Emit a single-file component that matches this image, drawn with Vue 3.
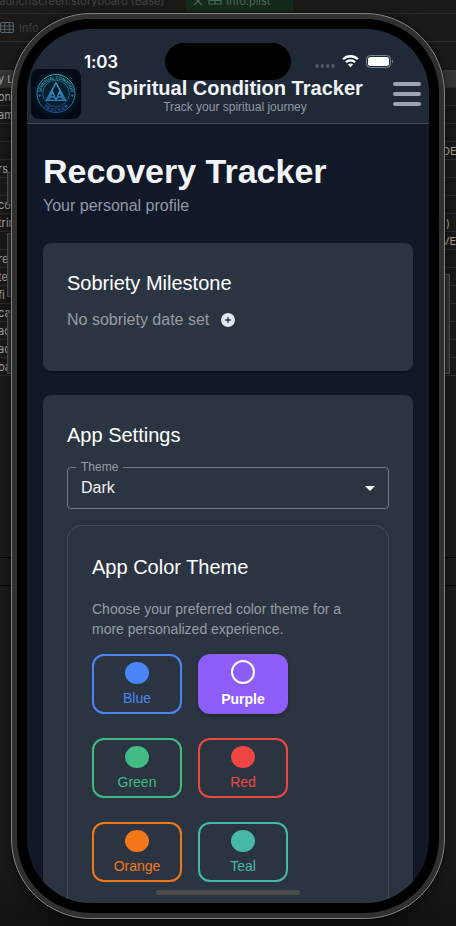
<script setup>
const leftRows = ['y Li', 'on', 'am', '', '', 'rs', '', 'co', 'trin', '', 're', 'te', 'fi', 'ca', 'ac', 'ac', 'ba']
const rightRows = ['', '', '', '', 'DE', '', '', '', ')', 'VE', '', '', '', '', '', '', '']
const themes = [
  { name: 'Blue', color: '#4a86f7' },
  { name: 'Purple', color: '#8e5cf7', selected: true },
  { name: 'Green', color: '#41ba83' },
  { name: 'Red', color: '#f04545' },
  { name: 'Orange', color: '#f27719' },
  { name: 'Teal', color: '#47b9a9' }
]
</script>

<template>
  <div class="desktop">
    <div class="editor-tabs">
      <span class="tab">LaunchScreen.storyboard (Base)</span>
      <span class="tab active">
        <svg width="31" height="12" viewBox="0 0 31 12" fill="none" stroke="#4d6a54" stroke-width="1.2"><path d="M1 5l8-8M1-3l8 8M16-4h12v8H16zM16 .500h12M22-4v8" /></svg>
        Info.plist
      </span>
    </div>
    <div class="crumbs">
      <svg width="14" height="11" viewBox="0 0 14 11" fill="none" stroke="#53656e"><rect x=".5" y=".5" width="13" height="10" rx="1.500" /><path d="M0 4h14M0 7.300h14M4.700 0v11M9.300 0v11" /></svg>
      <span>Info</span>
    </div>
    <div class="table">
      <div v-for="(t, i) in leftRows" :key="i" class="table-row" :class="{ head: i === 0 }">
        <span class="key">{{ t }}</span><span class="value">{{ rightRows[i] }}</span>
      </div>
    </div>
    <div class="debug-bar"></div>

    <i class="side-button action"></i>
    <i class="side-button vol-up"></i>
    <i class="side-button vol-down"></i>
    <i class="side-button power"></i>

    <div class="phone">
      <div class="bezel">
        <div class="screen">
          <header class="app-header">
            <div class="logo">
              <svg width="50" height="50" viewBox="0 0 50 50">
                <defs>
                  <linearGradient id="lg" x1="0" y1="5" x2="0" y2="45" gradientUnits="userSpaceOnUse">
                    <stop offset="0" stop-color="#3fa9b0" /><stop offset=".5" stop-color="#3184b2" /><stop offset="1" stop-color="#3047a0" />
                  </linearGradient>
                  <radialGradient id="glow"><stop offset=".5" stop-color="#052031" /><stop offset="1" stop-color="#020b16" /></radialGradient>
                  <path id="top-arc" d="M10.400 25a14.700 14.700 0 0 1 29.400 0" />
                  <path id="bottom-arc" d="M7 24.500a18 18 0 0 0 36 0" />
                </defs>
                <circle cx="25" cy="24.500" r="25" fill="url(#glow)" />
                <g fill="none" stroke="url(#lg)">
                  <circle cx="25" cy="24.500" r="19" stroke-width="1" />
                  <circle cx="25" cy="24.500" r="13.300" stroke-width=".6" />
                  <path d="M15.500 31.200L25 14l9.500 17.200z" stroke-width="1.500" />
                  <path d="M17.500 31l3.900-8.500L25 31l3.600-8.500 3.900 8.500M19 28h5M26 28h5" stroke-width="1.500" />
                </g>
                <g class="logo-text" fill="url(#lg)">
                  <text><textPath href="#top-arc" startOffset="50%" text-anchor="middle" textLength="43">SPIRITUAL CONDITION</textPath></text>
                  <text><textPath href="#bottom-arc" startOffset="50%" text-anchor="middle" textLength="27">TRACKER</textPath></text>
                  <circle cx="8.800" cy="26.500" r="1" /><circle cx="41.200" cy="26.500" r="1" />
                </g>
              </svg>
            </div>
            <div class="brand">
              <h1>Spiritual Condition Tracker</h1>
              <p>Track your spiritual journey</p>
            </div>
            <div class="menu"><i></i><i></i><i></i></div>
          </header>

          <main class="page">
            <h2>Recovery Tracker</h2>
            <p class="lead">Your personal profile</p>

            <section class="card milestone">
              <h3>Sobriety Milestone</h3>
              <div class="date-row">
                <span>No sobriety date set</span>
                <svg width="14" height="14" viewBox="0 0 14 14"><circle cx="7" cy="7" r="7" fill="#e5e7eb" /><path d="M7 4.200v5.600M4.200 7h5.600" stroke="#2b3541" stroke-width="1.400" /></svg>
              </div>
            </section>

            <section class="card settings">
              <h3>App Settings</h3>
              <fieldset class="select">
                <legend>Theme</legend>
                <span>Dark</span>
                <svg width="10" height="5" viewBox="0 0 10 5"><path d="M0 0h10L5 5z" fill="#fff" /></svg>
              </fieldset>
              <div class="palette">
                <h3>App Color Theme</h3>
                <p>Choose your preferred color theme for a more personalized experience.</p>
                <div class="swatches">
                  <button v-for="t in themes" :key="t.name" class="swatch" :class="{ selected: t.selected }" :style="{ '--tone': t.color }">
                    <i class="dot"></i>
                    <span>{{ t.name }}</span>
                  </button>
                </div>
              </div>
            </section>
          </main>

          <div class="status-bar">
            <span class="time">1:03</span>
            <div class="status-icons">
              <svg class="cell" width="20" height="4" viewBox="0 0 20 4" fill="#4f5764"><circle cx="2" cy="2" r="1.900" /><circle cx="7.300" cy="2" r="1.900" /><circle cx="12.700" cy="2" r="1.900" /><circle cx="18" cy="2" r="1.900" /></svg>
              <svg class="wifi" width="17" height="13" viewBox="0 0 17 13"><path d="M1 4.300a10.700 10.700 0 0 1 15 0M3.900 7.300a6.600 6.600 0 0 1 9.200 0" fill="none" stroke="#fff" stroke-width="2.300" /><path d="M8.500 12.300L5.900 9.600a3.800 3.800 0 0 1 5.200 0z" fill="#fff" /></svg>
              <svg width="27" height="13" viewBox="0 0 27 13"><rect x=".5" y=".5" width="24" height="12" rx="3.800" fill="none" stroke="#7e858f" /><rect x="2" y="2" width="21" height="9" rx="2.500" fill="#fff" /><path d="M26 4.500c1.300.7 1.300 3.300 0 4z" fill="#7e858f" /></svg>
            </div>
          </div>
          <div class="island"></div>
          <div class="home-bar"></div>
        </div>
      </div>
    </div>
  </div>
</template>

<style>
body { margin: 0; background: #1a1917; }
</style>

<style scoped>
* { box-sizing: border-box; }
h1, h2, h3, p { margin: 0; font-weight: 400; }
.desktop { position: relative; width: 456px; height: 926px; overflow: hidden; background: linear-gradient(#1b1a18 0 870px, #11110f); font-family: "Liberation Sans", Arial, sans-serif; }
.editor-tabs { display: flex; height: 14px; border-bottom: 1px solid #2a2a28; }
.tab { width: 186px; height: 12px; overflow: hidden; white-space: nowrap; font: 11px/3px Inter, sans-serif; color: #444340; text-indent: -7px; }
.tab.active { display: flex; gap: 2px; width: 107px; padding-left: 7px; text-indent: 0; background: #152b1b; color: #4d6a54; }
.crumbs { display: flex; align-items: center; gap: 5px; height: 28px; border-bottom: 1px solid #343330; font: 11px Inter, sans-serif; color: #3f3f3c; }
.table { margin-top: 28px; }
.table-row { display: flex; justify-content: space-between; height: 18px; border-bottom: 1px solid #302f2d; font: 11px/18px Inter, sans-serif; color: #aaa9a7; white-space: nowrap; }
.table-row.head { background: #373735; }
.key { width: 16px; margin-left: -2px; overflow: hidden; }
.value { width: 12px; overflow: hidden; text-indent: -2px; }
.table-row:nth-child(9) .value { width: 10px; text-indent: 0; }
.debug-bar { height: 29px; margin-top: 181px; border: solid #030303; border-width: 1px 0; }
.side-button { position: absolute; background: #343434; border: 1px solid #555; width: 6px; }
.action { left: 7px; top: 172px; height: 33px; }
.vol-up { left: 7px; top: 233px; height: 64px; }
.vol-down { left: 7px; top: 312px; height: 62px; }
.power { left: 444px; top: 274px; height: 100px; }
.phone { position: absolute; left: 11px; top: 13px; width: 434px; height: 906px; border: 1px solid #858585; border-radius: 80px; background: #303030; padding: 5px; box-shadow: 0 0 2px #000, 0 6px 18px rgba(0, 0, 0, .45); }
.bezel { height: 100%; border-radius: 74px; background: #000; padding: 10px; }
.screen { position: relative; height: 874px; border-radius: 64px; overflow: hidden; background: #111827; }
.app-header { display: flex; align-items: flex-start; height: 95px; padding: 40px 8px 0 4px; background: #1f2937; border-bottom: 1px solid #414958; }
.logo { width: 50px; height: 50px; border-radius: 8px; overflow: hidden; background: #020b16; }
.logo svg { display: block; }
.logo-text { font: bold 4.600px "Liberation Sans", sans-serif; }
.brand { flex: 1; padding-top: 7px; text-align: center; white-space: nowrap; padding-right: 4px; }
.brand h1 { font-size: 20px; line-height: 24px; font-weight: 700; color: #f1f3f5; }
.brand p { font-size: 12px; line-height: 14px; color: #9299a7; }
.menu { display: flex; flex-direction: column; gap: 6px; width: 28px; margin-top: 13px; }
.menu i { height: 4px; border-radius: 2px; background: #9ca3b3; }
.page { padding: 26px 16px 0; color: #f3f4f6; }
.page h2 { font-size: 34px; line-height: 42px; font-weight: 700; }
.lead { font-size: 16px; line-height: 24px; color: #9299a7; padding-top: 2px; }
.card { border-radius: 8px; background: #2b3541; padding: 24px; box-shadow: 0 1px 3px rgba(0, 0, 0, .4); }
.card h3 { font-size: 20px; line-height: 32px; color: #fff; }
.milestone { height: 128px; margin-top: 25px; }
.date-row { display: flex; align-items: center; gap: 12px; margin-top: 9px; line-height: 24px; font-size: 16px; color: #959ca5; }
.settings { margin-top: 24px; height: 680px; }
.select { display: flex; align-items: center; justify-content: space-between; width: 322px; min-width: 0; height: 49px; margin: 9px 0 0; padding: 0 13px 6px; border: 1px solid #747b83; border-radius: 4px; font-size: 16px; color: #f0f1f3; }
.select legend { margin-left: -5px; padding: 0 5px; font-size: 12px; line-height: 14px; color: #959ca5; }
.select span { line-height: 28px; }
.palette { height: 560px; margin-top: 16px; padding: 25px 24px 24px; border: 1px solid #424b55; border-radius: 14px; box-shadow: 0 2px 10px rgba(0, 0, 0, .1); }
.palette p { margin-top: 16px; font-size: 14px; line-height: 20px; color: #959ca5; }
.swatches { display: grid; grid-template-columns: 90px 90px; gap: 24px 16px; margin-top: 15px; }
.swatch { display: flex; flex-direction: column; align-items: center; height: 60px; padding: 6px 0 0; border: 2px solid var(--tone); border-radius: 12px; background: none; color: var(--tone); font: 14px/18px "Liberation Sans", sans-serif; }
.dot { width: 24px; height: 22px; border-radius: 50%; background: var(--tone); margin-bottom: 5px; }
.selected { background: var(--tone); color: #fff; font-weight: 700; padding-top: 4px; box-shadow: 0 2px 4px rgba(0, 0, 0, .3); }
.selected .dot { height: 24px; border: 2px solid #fff; margin-bottom: 6px; }
.status-bar { position: absolute; inset: 0 0 auto; display: flex; justify-content: space-between; height: 54px; padding: 24px 36px 0 57px; color: #fff; }
.time { font: 600 17px/18px Inter, sans-serif; letter-spacing: -.2px; }
.status-icons { display: flex; gap: 7px; padding-top: 2px; }
.cell { margin-top: 9px; }
.island { position: absolute; left: 138px; top: 14px; width: 126px; height: 37px; border-radius: 19px; background: #000; }
.home-bar { position: absolute; left: 129px; top: 861px; width: 144px; height: 5px; border-radius: 3px; background: #4b4b4b; }
</style>
